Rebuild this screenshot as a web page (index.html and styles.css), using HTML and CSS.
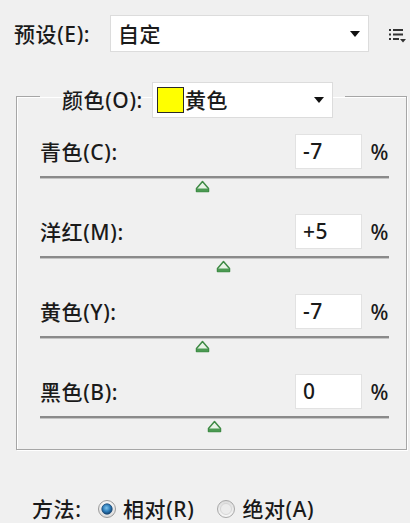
FILE: index.html
```html
<!DOCTYPE html>
<html lang="zh">
<head>
<meta charset="utf-8">
<link rel="stylesheet" href="styles.css">
</head>
<body>
<div class="panel">
  <div class="preset-row">
    <span class="label preset-label">预设(E):</span>
    <div class="select preset-select">
      <span class="select-text">自定</span>
      <span class="caret"></span>
    </div>
    <svg class="menu-icon" width="18" height="16" viewBox="0 0 18 16">
      <rect x="1" y="2" width="2" height="2" fill="#333"/>
      <rect x="5" y="2" width="10" height="2" fill="#333"/>
      <rect x="1" y="6.5" width="2" height="2" fill="#333"/>
      <rect x="5" y="6.5" width="10" height="2" fill="#333"/>
      <rect x="1" y="11" width="2" height="2" fill="#333"/>
      <rect x="5" y="11" width="6" height="2" fill="#333"/>
      <polygon points="12,12 18,12 15,15.5" fill="#333"/>
    </svg>
  </div>

  <fieldset class="group">
    <legend class="legend">
      <span class="label">颜色(O):</span>
      <div class="select color-select">
        <span class="swatch"></span>
        <span class="select-text color-text">黄色</span>
        <span class="caret"></span>
      </div>
    </legend>

    <div class="rows">
      <div class="row">
        <div class="row-head">
          <span class="label">青色(C):</span>
          <span class="value">-7</span>
          <span class="pct">%</span>
        </div>
        <div class="slider">
          <div class="track"></div>
          <div class="thumb-lane"><svg class="thumb" style="left:-3.5%" width="15" height="13" viewBox="0 0 15 13"><path d="M7.5 1.5 L13.5 8.5 L13.5 11.5 L1.5 11.5 L1.5 8.5 Z" fill="#e8f3e6" stroke="#3f8a45" stroke-width="1.5" stroke-linejoin="round"/><rect x="2" y="8.5" width="11" height="3" fill="#4b9a52"/></svg></div>
        </div>
      </div>

      <div class="row">
        <div class="row-head">
          <span class="label">洋红(M):</span>
          <span class="value">+5</span>
          <span class="pct">%</span>
        </div>
        <div class="slider">
          <div class="track"></div>
          <div class="thumb-lane"><svg class="thumb" style="left:2.5%" width="15" height="13" viewBox="0 0 15 13"><path d="M7.5 1.5 L13.5 8.5 L13.5 11.5 L1.5 11.5 L1.5 8.5 Z" fill="#e8f3e6" stroke="#3f8a45" stroke-width="1.5" stroke-linejoin="round"/><rect x="2" y="8.5" width="11" height="3" fill="#4b9a52"/></svg></div>
        </div>
      </div>

      <div class="row">
        <div class="row-head">
          <span class="label">黄色(Y):</span>
          <span class="value">-7</span>
          <span class="pct">%</span>
        </div>
        <div class="slider">
          <div class="track"></div>
          <div class="thumb-lane"><svg class="thumb" style="left:-3.5%" width="15" height="13" viewBox="0 0 15 13"><path d="M7.5 1.5 L13.5 8.5 L13.5 11.5 L1.5 11.5 L1.5 8.5 Z" fill="#e8f3e6" stroke="#3f8a45" stroke-width="1.5" stroke-linejoin="round"/><rect x="2" y="8.5" width="11" height="3" fill="#4b9a52"/></svg></div>
        </div>
      </div>

      <div class="row">
        <div class="row-head">
          <span class="label">黑色(B):</span>
          <span class="value">0</span>
          <span class="pct">%</span>
        </div>
        <div class="slider">
          <div class="track"></div>
          <div class="thumb-lane"><svg class="thumb" style="left:0%" width="15" height="13" viewBox="0 0 15 13"><path d="M7.5 1.5 L13.5 8.5 L13.5 11.5 L1.5 11.5 L1.5 8.5 Z" fill="#e8f3e6" stroke="#3f8a45" stroke-width="1.5" stroke-linejoin="round"/><rect x="2" y="8.5" width="11" height="3" fill="#4b9a52"/></svg></div>
        </div>
      </div>
    </div>
  </fieldset>

  <div class="method-row">
    <span class="label">方法:</span>
    <span class="radio">
      <svg width="20" height="20" viewBox="0 0 20 20">
        <defs>
          <radialGradient id="rb" cx="45%" cy="40%" r="60%">
            <stop offset="0" stop-color="#7fc4ee"/>
            <stop offset="0.6" stop-color="#2a79b6"/>
            <stop offset="1" stop-color="#16406b"/>
          </radialGradient>
          <linearGradient id="ring" x1="0" y1="0" x2="0" y2="1">
            <stop offset="0" stop-color="#f6f6f6"/>
            <stop offset="1" stop-color="#dcdcdc"/>
          </linearGradient>
        </defs>
        <circle cx="10" cy="10" r="8.5" fill="url(#ring)" stroke="#9a9a9a" stroke-width="1"/>
        <circle cx="10" cy="10" r="5.2" fill="url(#rb)" stroke="#1d4e7c" stroke-width="0.8"/>
      </svg>
      <span class="label">相对(R)</span>
    </span>
    <span class="radio">
      <svg width="20" height="20" viewBox="0 0 20 20">
        <defs>
          <linearGradient id="ring2" x1="0" y1="0" x2="0" y2="1">
            <stop offset="0" stop-color="#dcdcdc"/>
            <stop offset="1" stop-color="#f8f8f8"/>
          </linearGradient>
        </defs>
        <circle cx="10" cy="10" r="8.5" fill="url(#ring2)" stroke="#a8a8a8" stroke-width="1"/>
        <circle cx="10" cy="10" r="5.5" fill="#ececec" stroke="#d0d0d0" stroke-width="0.8"/>
      </svg>
      <span class="label">绝对(A)</span>
    </span>
  </div>
</div>
</body>
</html>
```

FILE: styles.css
```css
html, body {
  margin: 0;
  padding: 0;
  background: #f0f0f0;
}
body {
  font-family: "Noto Sans", "Noto Sans CJK SC", sans-serif;
  font-size: 21px;
  font-weight: 500;
  letter-spacing: 0.6px;
  color: #1a1a1a;
  width: 410px;
  height: 523px;
  overflow: hidden;
}
.panel {
  display: flex;
  flex-direction: column;
}
.label {
  line-height: 28px;
  white-space: nowrap;
}
.preset-row {
  display: flex;
  align-items: center;
  margin-top: 15px;
  height: 37px;
  padding-left: 14px;
}
.preset-label {
  width: 96px;
}
.select {
  display: flex;
  align-items: center;
  background: #fff;
  border: 1px solid #dcdcdc;
  box-sizing: border-box;
  position: relative;
}
.preset-select {
  width: 259px;
  height: 37px;
  padding-left: 7px;
}
.select-text {
  flex: 1;
  line-height: 28px;
}
.caret {
  width: 0;
  height: 0;
  border-left: 5px solid transparent;
  border-right: 5px solid transparent;
  border-top: 6px solid #111;
  margin-right: 8px;
}
.menu-icon {
  margin-left: 19px;
  margin-top: 2px;
}
.group {
  margin: 22px 0 0 16px;
  width: 390px;
  box-sizing: border-box;
  border: 1px solid #a6a6a6;
  box-shadow: inset 1px 1px 0 #fff, 1px 1px 0 #fff;
  padding: 0 17px 15px 23px;
}
.legend {
  display: flex;
  align-items: center;
  margin-left: 0;
  padding: 8px 12px 0 22px;
}
.legend .label {
  width: 90px;
}
.color-select {
  width: 181px;
  height: 36px;
  padding-left: 4px;
}
.swatch {
  width: 25px;
  height: 24px;
  background: #ffff00;
  border: 1.5px solid #2a2a2a;
  margin-right: 1px;
}
.rows {
  display: flex;
  flex-direction: column;
  gap: 20px;
  margin-top: 16px;
}
.row {
  display: flex;
  flex-direction: column;
  height: 60px;
}
.row-head {
  display: flex;
  align-items: center;
  height: 35px;
}
.row-head .label {
  flex: 1;
}
.value {
  width: 67px;
  height: 35px;
  box-sizing: border-box;
  background: #fff;
  border: 1px solid #e2e2e2;
  padding-left: 7px;
  line-height: 33px;
}
.pct {
  width: 27px;
  text-align: right;
  line-height: 28px;
}
.slider {
  margin-top: 7px;
  width: 349px;
}
.track {
  height: 2px;
  background: #8a8a8a;
  border-bottom: 1px solid #c4c4c4;
}
.thumb-lane {
  position: relative;
  height: 14px;
  margin-top: 1px;
}
.thumb {
  position: absolute;
  top: 0;
  margin-left: 167px;
}
.method-row {
  display: flex;
  align-items: center;
  margin-top: 45px;
  padding-left: 32px;
}
.method-row > .label {
  width: 65px;
}
.radio {
  display: flex;
  align-items: center;
  gap: 6px;
  margin-right: 22px;
}
```
